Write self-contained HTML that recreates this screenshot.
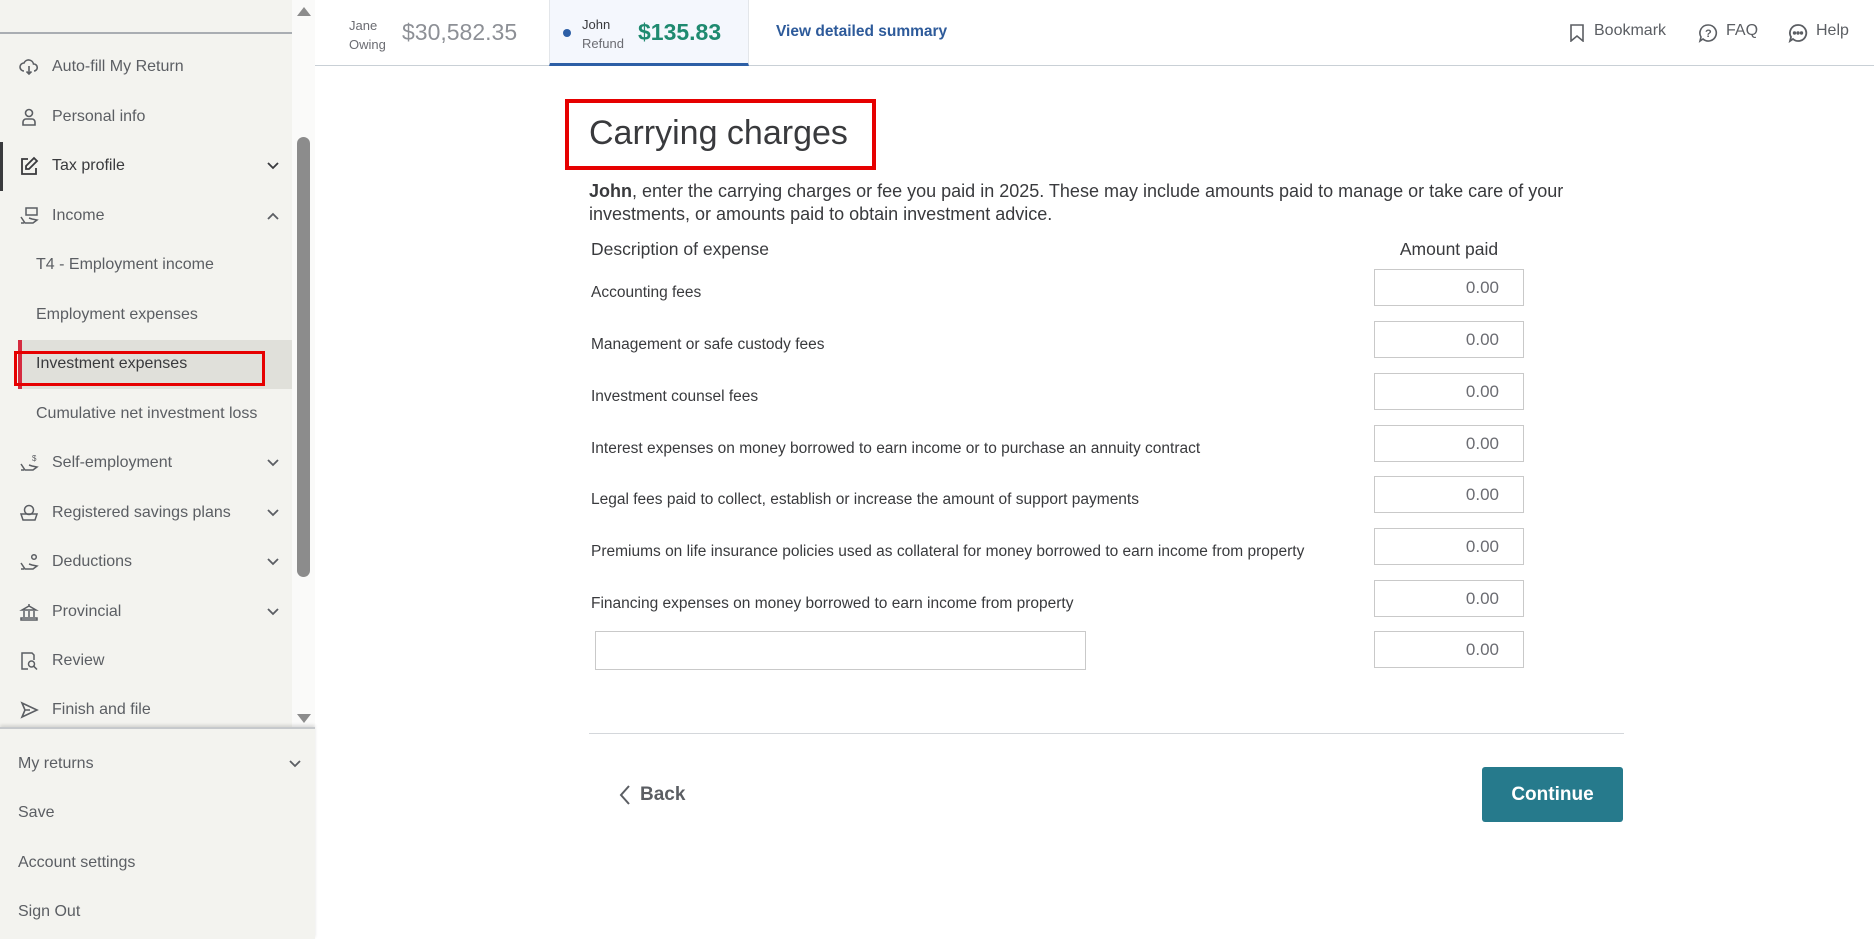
<!DOCTYPE html>
<html><head><meta charset="utf-8"><style>
*{margin:0;padding:0;box-sizing:border-box}
body{width:1874px;height:939px;overflow:hidden;background:#fff;font-family:"Liberation Sans",sans-serif;position:relative;color:#393a3d}
.sb{position:absolute;left:0;top:0;width:292px;height:939px;background:#f3f3ef}
.track{position:absolute;left:292px;top:0;width:23px;height:729px;background:#fafaf9}
.thumb{position:absolute;left:297px;top:137px;width:13px;height:440px;background:#8c8c8c;border-radius:7px}
.it{position:absolute;left:52px;font-size:16px;color:#5b5e63;line-height:20px;transform:translateY(-10px)}
.sub{left:36px}
.ic{position:absolute;left:19px;width:20px;height:20px;transform:translateY(-10px)}
.chev{position:absolute;left:266px;width:14px;height:14px;transform:translateY(-7px)}
.abs{position:absolute}
.inp{position:absolute;left:1374px;width:150px;height:37px;border:1px solid #c9c9c9;background:#fff;font-size:17px;color:#6b6c72;text-align:right;padding-right:24px;line-height:35px}
.lbl{position:absolute;left:591px;font-size:15.5px;color:#393a3d;transform:translateY(-9px)}
</style></head><body>
<div class="sb"></div>
<div class="track"></div>
<div class="thumb"></div>
<svg class="abs" style="left:296px;top:5px" width="16" height="12"><path d="M1 11L8 2 15 11Z" fill="#8c8c8c"/></svg>
<svg class="abs" style="left:296px;top:713px" width="16" height="12"><path d="M1 1L8 10 15 1Z" fill="#8c8c8c"/></svg>
<div class="abs" style="left:0;top:32px;width:292px;height:2px;background:#a9adb2"></div>
<div class="it" style="top:-9px;left:52px">What's new to taxes</div>

<svg class="ic" style="top:67px" viewBox="0 0 20 20" fill="none" stroke="#5b5e63" stroke-width="1.6"><path d="M5 14a4 4 0 010-8 5 5 0 019.5 1A3.5 3.5 0 0115 14M10 9v8M7.5 14.5L10 17l2.5-2.5"/></svg>
<div class="it" style="top:67px">Auto-fill My Return</div>
<svg class="ic" style="top:117px" viewBox="0 0 20 20" fill="none" stroke="#5b5e63" stroke-width="1.6"><circle cx="10" cy="6" r="3.5"/><path d="M4 18v-3a3 3 0 013-3h6a3 3 0 013 3v3z"/></svg>
<div class="it" style="top:117px">Personal info</div>
<div class="abs" style="left:0;top:142px;width:3px;height:49px;background:#393a3d"></div>
<svg class="ic" style="top:166px" viewBox="0 0 20 20" fill="none" stroke="#393a3d" stroke-width="1.8"><path d="M9 3H3v15h14v-6"/><path d="M15 2l3 3-8 8H7v-3z"/></svg>
<div class="it" style="top:166px;color:#393a3d">Tax profile</div>
<svg class="chev" style="top:166px" viewBox="0 0 14 14" fill="none" stroke="#393a3d" stroke-width="1.8"><path d="M2 4l5 5 5-5"/></svg>
<svg class="ic" style="top:216px" viewBox="0 0 20 20" fill="none" stroke="#5b5e63" stroke-width="1.5"><rect x="7" y="2" width="11" height="7"/><path d="M2 11l4 6h8l4-3-5-1-3-1M2 17h3"/></svg>
<div class="it" style="top:216px">Income</div>
<svg class="chev" style="top:216px" viewBox="0 0 14 14" fill="none" stroke="#5b5e63" stroke-width="1.8"><path d="M2 10l5-5 5 5"/></svg>
<div class="it sub" style="top:265px">T4 - Employment income</div>
<div class="it sub" style="top:315px">Employment expenses</div>
<div class="abs" style="left:18px;top:340px;width:274px;height:49px;background:#e0e0da"></div>
<div class="abs" style="left:18px;top:340px;width:4px;height:49px;background:#d52b3f"></div>
<div class="abs" style="left:14px;top:351px;width:251px;height:35px;border:3px solid #e60000"></div>
<div class="it sub" style="top:364px;color:#393a3d">Investment expenses</div>
<div class="it sub" style="top:414px">Cumulative net investment loss</div>
<svg class="ic" style="top:463px" viewBox="0 0 20 20" fill="none" stroke="#5b5e63" stroke-width="1.5"><path d="M2 11l4 6h8l4-3-5-1-3-1M2 17h3"/><text x="13" y="8" font-size="8" fill="#5b5e63" stroke="none">$</text></svg>
<div class="it" style="top:463px">Self-employment</div>
<svg class="chev" style="top:463px" viewBox="0 0 14 14" fill="none" stroke="#5b5e63" stroke-width="1.8"><path d="M2 4l5 5 5-5"/></svg>
<svg class="ic" style="top:513px" viewBox="0 0 20 20" fill="none" stroke="#5b5e63" stroke-width="1.5"><circle cx="10" cy="7" r="4.5"/><path d="M2 11h16l-2 6H4z"/></svg>
<div class="it" style="top:513px">Registered savings plans</div>
<svg class="chev" style="top:513px" viewBox="0 0 14 14" fill="none" stroke="#5b5e63" stroke-width="1.8"><path d="M2 4l5 5 5-5"/></svg>
<svg class="ic" style="top:562px" viewBox="0 0 20 20" fill="none" stroke="#5b5e63" stroke-width="1.5"><path d="M2 11l4 6h8l4-3-5-1-3-1M2 17h3"/><circle cx="15" cy="5" r="2.3"/></svg>
<div class="it" style="top:562px">Deductions</div>
<svg class="chev" style="top:562px" viewBox="0 0 14 14" fill="none" stroke="#5b5e63" stroke-width="1.8"><path d="M2 4l5 5 5-5"/></svg>
<svg class="ic" style="top:612px" viewBox="0 0 20 20" fill="none" stroke="#5b5e63" stroke-width="1.5"><path d="M3 8l7-4 7 4zM5 9v6M10 9v6M15 9v6M2 16h16v2H2zM10 2v2"/></svg>
<div class="it" style="top:612px">Provincial</div>
<svg class="chev" style="top:612px" viewBox="0 0 14 14" fill="none" stroke="#5b5e63" stroke-width="1.8"><path d="M2 4l5 5 5-5"/></svg>
<svg class="ic" style="top:661px" viewBox="0 0 20 20" fill="none" stroke="#5b5e63" stroke-width="1.5"><path d="M9 18H3V2h10l2 2v5"/><circle cx="12.5" cy="13" r="3"/><path d="M14.7 15.2L18 18.5"/></svg>
<div class="it" style="top:661px">Review</div>
<svg class="ic" style="top:710px" viewBox="0 0 20 20" fill="none" stroke="#5b5e63" stroke-width="1.6"><path d="M3 3l15 7-15 7 3-7zM6 10h5"/></svg>
<div class="it" style="top:710px">Finish and file</div>

<div class="abs" style="left:0;top:727px;width:315px;height:212px;background:#f3f3ef;border-top:2px solid #c6c9cc;box-shadow:0 -2px 3px rgba(0,0,0,.12)"></div>
<div class="it" style="left:18px;top:764px">My returns</div>
<svg class="chev" style="left:288px;top:764px" viewBox="0 0 14 14" fill="none" stroke="#5b5e63" stroke-width="1.8"><path d="M2 4l5 5 5-5"/></svg>
<div class="it" style="left:18px;top:813px">Save</div>
<div class="it" style="left:18px;top:863px">Account settings</div>
<div class="it" style="left:18px;top:912px">Sign Out</div>

<!-- header -->
<div class="abs" style="left:315px;top:65px;width:1559px;height:1px;background:#c9d0d6"></div>
<div class="abs" style="left:349px;top:16px;font-size:13px;color:#6b6c72;line-height:19px">Jane<br>Owing</div>
<div class="abs" style="left:402px;top:19px;font-size:23px;color:#8d9096">$30,582.35</div>
<div class="abs" style="left:549px;top:0;width:200px;height:66px;background:#f4f7fd;border-left:1px solid #e3e6ea;border-right:1px solid #e3e6ea;border-bottom:3px solid #2d5fa6"></div>
<div class="abs" style="left:563px;top:29px;width:8px;height:8px;border-radius:50%;background:#2d5fa6"></div>
<div class="abs" style="left:582px;top:15px;font-size:13px;color:#393a3d;line-height:19px">John<br><span style="color:#6b6c72">Refund</span></div>
<div class="abs" style="left:638px;top:19px;font-size:23px;color:#1f8a70;font-weight:bold">$135.83</div>
<div class="abs" style="left:776px;top:23px;font-size:15.5px;color:#2d5a9a;font-weight:bold">View detailed summary</div>
<svg class="abs" style="left:1569px;top:24px" width="16" height="18" fill="none" stroke="#5b5e63" stroke-width="1.6"><path d="M2 1h12v16l-6-5-6 5z"/></svg>
<div class="abs" style="left:1594px;top:22px;font-size:16px;color:#5b5e63">Bookmark</div>
<svg class="abs" style="left:1698px;top:23px" width="20" height="20" fill="none" stroke="#5b5e63" stroke-width="1.6"><path d="M10 2a8 8 0 11-5 14l-3 2 1-4A8 8 0 0110 2z"/><text x="7" y="14" font-size="11" font-weight="bold" fill="#5b5e63" stroke="none" font-family="Liberation Sans">?</text></svg>
<div class="abs" style="left:1726px;top:22px;font-size:16px;color:#5b5e63">FAQ</div>
<svg class="abs" style="left:1788px;top:23px" width="20" height="20" fill="none" stroke="#5b5e63" stroke-width="1.8"><path d="M10 2a8 8 0 11-5 14l-3 2 1-4A8 8 0 0110 2z"/><circle cx="6.5" cy="10" r=".8" fill="#5b5e63"/><circle cx="10" cy="10" r=".8" fill="#5b5e63"/><circle cx="13.5" cy="10" r=".8" fill="#5b5e63"/></svg>
<div class="abs" style="left:1816px;top:22px;font-size:16px;color:#5b5e63">Help</div>

<!-- content -->
<div class="abs" style="left:565px;top:99px;width:311px;height:71px;border:4px solid #e60000"></div>
<div class="abs" style="left:589px;top:114px;font-size:34px;color:#393a3d">Carrying charges</div>
<div class="abs" style="left:589px;top:180px;width:1020px;font-size:18px;line-height:23px;color:#393a3d"><b>John</b>, enter the carrying charges or fee you paid in 2025. These may include amounts paid to manage or take care of your investments, or amounts paid to obtain investment advice.</div>
<div class="abs" style="left:591px;top:239px;font-size:17.5px;color:#393a3d">Description of expense</div>
<div class="abs" style="left:1374px;top:239px;width:150px;text-align:center;font-size:17.5px;color:#393a3d">Amount paid</div>

<div class="lbl" style="top:293px">Accounting fees</div>
<div class="lbl" style="top:345px">Management or safe custody fees</div>
<div class="lbl" style="top:397px">Investment counsel fees</div>
<div class="lbl" style="top:449px">Interest expenses on money borrowed to earn income or to purchase an annuity contract</div>
<div class="lbl" style="top:500px">Legal fees paid to collect, establish or increase the amount of support payments</div>
<div class="lbl" style="top:552px">Premiums on life insurance policies used as collateral for money borrowed to earn income from property</div>
<div class="lbl" style="top:604px">Financing expenses on money borrowed to earn income from property</div>
<div class="inp" style="top:269px">0.00</div>
<div class="inp" style="top:321px">0.00</div>
<div class="inp" style="top:373px">0.00</div>
<div class="inp" style="top:425px">0.00</div>
<div class="inp" style="top:476px">0.00</div>
<div class="inp" style="top:528px">0.00</div>
<div class="inp" style="top:580px">0.00</div>
<div class="inp" style="top:631px">0.00</div>
<div class="abs" style="left:595px;top:631px;width:491px;height:39px;border:1px solid #c9c9c9"></div>

<div class="abs" style="left:589px;top:733px;width:1035px;height:1px;background:#d4d7db"></div>
<svg class="abs" style="left:619px;top:785px" width="12" height="20" fill="none" stroke="#5b5e63" stroke-width="2"><path d="M10 1L2 10l8 9"/></svg>
<div class="abs" style="left:640px;top:784px;font-size:19px;font-weight:bold;color:#5b5e63">Back</div>
<div class="abs" style="left:1482px;top:767px;width:141px;height:55px;background:#267a8c;border-radius:3px;color:#fff;font-weight:bold;font-size:19px;text-align:center;line-height:55px">Continue</div>
</body></html>
